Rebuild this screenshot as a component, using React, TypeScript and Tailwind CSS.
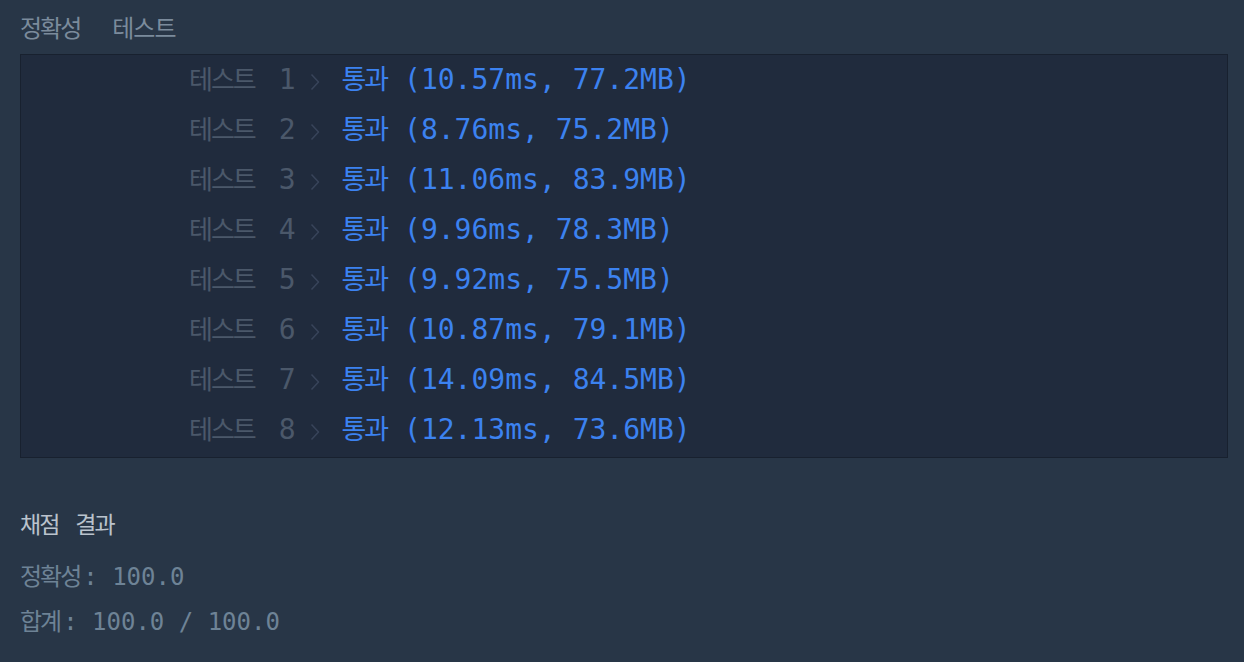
import React from 'react';

const results = [
  { id: 1, time: '10.57ms', mem: '77.2MB' },
  { id: 2, time: '8.76ms', mem: '75.2MB' },
  { id: 3, time: '11.06ms', mem: '83.9MB' },
  { id: 4, time: '9.96ms', mem: '78.3MB' },
  { id: 5, time: '9.92ms', mem: '75.5MB' },
  { id: 6, time: '10.87ms', mem: '79.1MB' },
  { id: 7, time: '14.09ms', mem: '84.5MB' },
  { id: 8, time: '12.13ms', mem: '73.6MB' },
];

const mono = "font-['DejaVu_Sans_Mono','Liberation_Mono',monospace]";
const kr = "font-['Noto_Sans_CJK_KR','Noto_Sans',sans-serif]";

const Chevron = () => (
  <svg width="10" height="18" viewBox="0 0 10 18" className="inline-block align-middle ml-[15px] mr-[21px] -translate-y-[3px]" fill="none">
    <polyline points="1.5,1.5 8.5,9 1.5,16.5" stroke="#38445a" strokeWidth="1.5" strokeLinejoin="round" />
  </svg>
);

const App: React.FC = () => {
  return (
    <div className="w-[1244px] h-[662px] bg-[#283647] px-[20px] overflow-hidden">
      <div className={`flex h-[54px] items-center gap-[32px] pb-[1px] text-[24px] tracking-[-2px] text-[#7b8b9c] ${kr}`}>
        <span>정확성</span>
        <span className="tracking-[-1px]">테스트</span>
      </div>

      <div className="w-[1208px] h-[404px] bg-[#202b3d] border border-[#18212f] pl-[168px]">
        {results.map(r => (
          <div key={r.id} className="h-[50px] leading-[46px] whitespace-pre">
            <span className={`text-[26px] tracking-[-2px] text-[#4b586a] ${kr}`}>테스트</span>
            <span className={`ml-[7px] text-[28px] text-[#4b586a] ${mono}`}> {r.id}</span>
            <Chevron />
            <span className={`text-[27px] tracking-[-2px] text-[#3c82f0] ${kr}`}>통과</span>
            <span className={`text-[28px] text-[#3c82f0] ${mono}`}> ({r.time}, {r.mem})</span>
          </div>
        ))}
      </div>

      <div className="pt-[45px]">
        <div className={`h-[40px] flex items-center gap-[17px] text-[23px] tracking-[-2px] text-[#bac3cd] ${kr}`}>
          <span>채점</span>
          <span>결과</span>
        </div>
        <div className="mt-[14px] h-[40px] leading-[36px] whitespace-pre text-[#6e8396]">
          <span className={`text-[24px] tracking-[-2px] ${kr}`}>정확성</span>
          <span className={`ml-[3px] text-[24px] ${mono}`}>: 100.0</span>
        </div>
        <div className="mt-[4px] h-[40px] leading-[38px] whitespace-pre text-[#6e8396]">
          <span className={`text-[24px] tracking-[-2px] ${kr}`}>합계</span>
          <span className={`ml-[3px] text-[24px] ${mono}`}>: 100.0 / 100.0</span>
        </div>
      </div>
    </div>
  );
};

export default App;
